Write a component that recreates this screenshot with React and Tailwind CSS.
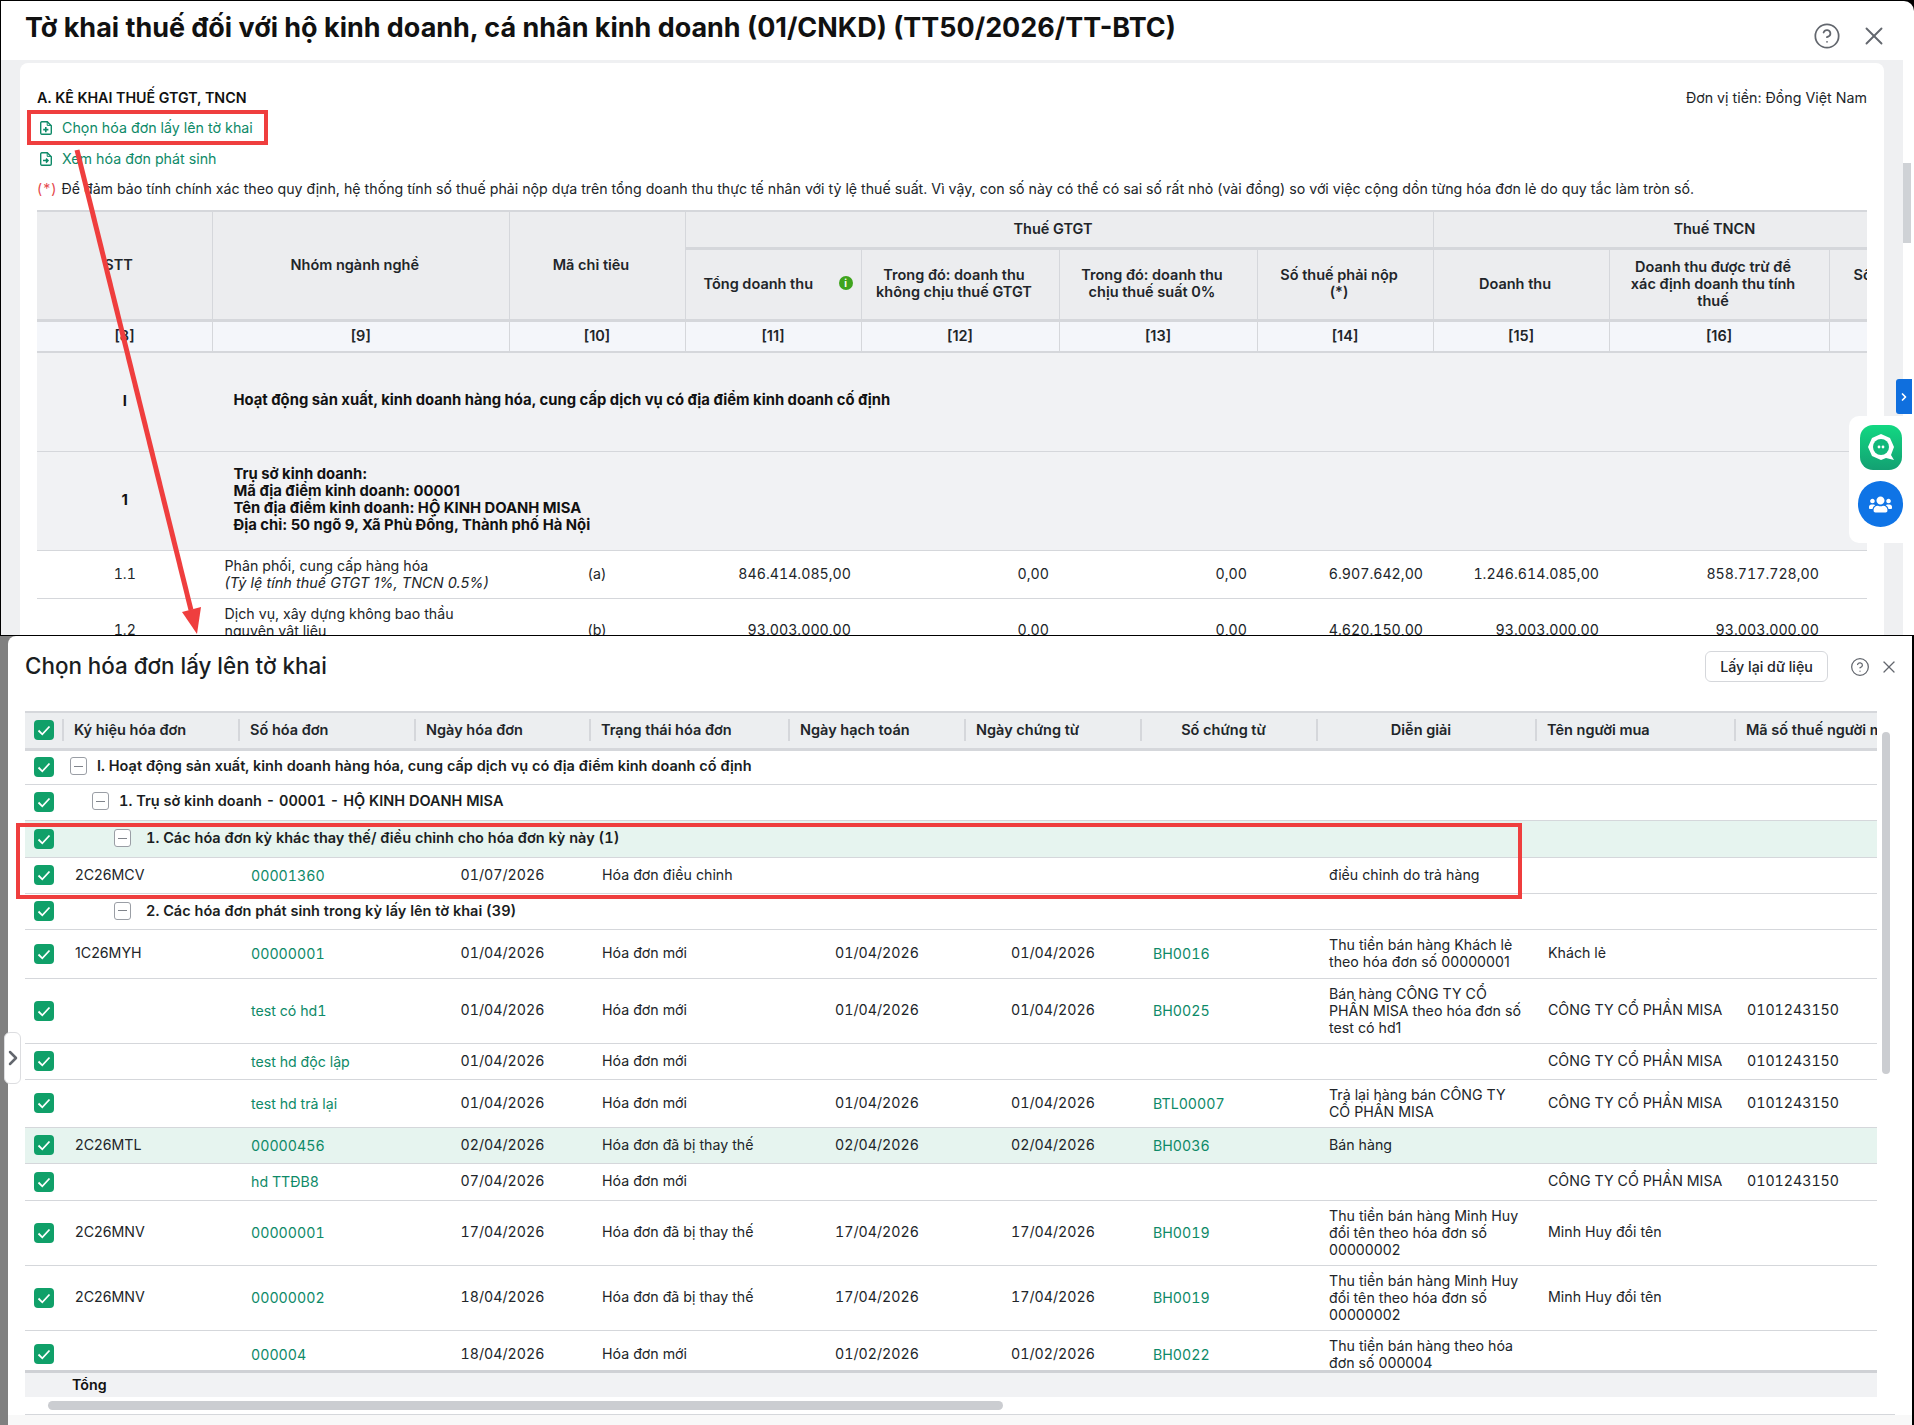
import React from 'react';
import { CircleHelp, X, ChevronRight } from 'lucide-react';
import { FaUsers } from 'react-icons/fa';

const FONT = 'font-[Inter,sans-serif]';

// top sheet
const topCols = [175.5, 296.5, 176, 176, 198, 198, 176, 176, 220, 166];
const indexes = ['[8]', '[9]', '[10]', '[11]', '[12]', '[13]', '[14]', '[15]', '[16]', '[17]'];

const topRows = [
  {
    stt: '1.1',
    h: 'h-[48px]',
    name: ['Phân phối, cung cấp hàng hóa'],
    note: '(Tỷ lệ tính thuế GTGT 1%, TNCN 0.5%)',
    code: '(a)',
    values: ['846.414.085,00', '0,00', '0,00', '6.907.642,00', '1.246.614.085,00', '858.717.728,00'],
  },
  {
    stt: '1.2',
    h: 'h-[65px]',
    name: ['Dịch vụ, xây dựng không bao thầu', 'nguyên vật liệu'],
    note: '(Tỷ lệ tính thuế GTGT 5%, TNCN 2%)',
    code: '(b)',
    values: ['93.003.000,00', '0,00', '0,00', '4.620.150,00', '93.003.000,00', '93.003.000,00'],
  },
];

// invoice picker
const invoiceCols = [37, 176, 176, 175, 199, 176, 176, 176, 219, 199, 200];
const invoiceHeads = [
  { label: 'Ký hiệu hóa đơn' },
  { label: 'Số hóa đơn' },
  { label: 'Ngày hóa đơn' },
  { label: 'Trạng thái hóa đơn' },
  { label: 'Ngày hạch toán' },
  { label: 'Ngày chứng từ' },
  { label: 'Số chứng từ', center: true },
  { label: 'Diễn giải', center: true },
  { label: 'Tên người mua' },
  { label: 'Mã số thuế người mua' },
];

const groups = [
  { text: 'I. Hoạt động sản xuất, kinh doanh hàng hóa, cung cấp dịch vụ có địa điểm kinh doanh cố định', wrap: 'pl-[8px] gap-[10px] pb-[2px]', h: 'h-[35px]' },
  { text: '1. Trụ sở kinh doanh - 00001 - HỘ KINH DOANH MISA', wrap: 'pl-[30px] gap-[10px] pb-[2px]', h: 'h-[36px]' },
  { text: '1. Các hóa đơn kỳ khác thay thế/ điều chỉnh cho hóa đơn kỳ này (1)', wrap: 'pl-[52px] gap-[15px] pb-[1px]', h: 'h-[37px]', hl: true },
];

const invoices = [
  { h: 'h-[36px]', kh: '2C26MCV', so: '00001360', ngay: '01/07/2026', tt: 'Hóa đơn điều chỉnh', dg: 'điều chỉnh do trả hàng' },
  { group: '2. Các hóa đơn phát sinh trong kỳ lấy lên tờ khai (39)', wrap: 'pl-[52px] gap-[15px] pb-[1px]', h: 'h-[36px]' },
  { h: 'h-[49px]', kh: '1C26MYH', so: '00000001', ngay: '01/04/2026', tt: 'Hóa đơn mới', ht: '01/04/2026', ct: '01/04/2026', sct: 'BH0016', dg: 'Thu tiền bán hàng Khách lẻ theo hóa đơn số 00000001', ten: 'Khách lẻ' },
  { h: 'h-[65px]', so: 'test có hd1', ngay: '01/04/2026', tt: 'Hóa đơn mới', ht: '01/04/2026', ct: '01/04/2026', sct: 'BH0025', dg: 'Bán hàng CÔNG TY CỔ PHẦN MISA theo hóa đơn số test có hd1', ten: 'CÔNG TY CỔ PHẦN MISA', mst: '0101243150' },
  { h: 'h-[36px]', so: 'test hd độc lập', ngay: '01/04/2026', tt: 'Hóa đơn mới', ten: 'CÔNG TY CỔ PHẦN MISA', mst: '0101243150' },
  { h: 'h-[48px]', so: 'test hd trả lại', ngay: '01/04/2026', tt: 'Hóa đơn mới', ht: '01/04/2026', ct: '01/04/2026', sct: 'BTL00007', dg: 'Trả lại hàng bán CÔNG TY CỔ PHẦN MISA', ten: 'CÔNG TY CỔ PHẦN MISA', mst: '0101243150' },
  { h: 'h-[36px]', hl: true, kh: '2C26MTL', so: '00000456', ngay: '02/04/2026', tt: 'Hóa đơn đã bị thay thế', ht: '02/04/2026', ct: '02/04/2026', sct: 'BH0036', dg: 'Bán hàng' },
  { h: 'h-[37px]', so: 'hd TTĐB8', ngay: '07/04/2026', tt: 'Hóa đơn mới', ten: 'CÔNG TY CỔ PHẦN MISA', mst: '0101243150' },
  { h: 'h-[65px]', kh: '2C26MNV', so: '00000001', ngay: '17/04/2026', tt: 'Hóa đơn đã bị thay thế', ht: '17/04/2026', ct: '17/04/2026', sct: 'BH0019', dg: 'Thu tiền bán hàng Minh Huy đổi tên theo hóa đơn số 00000002', ten: 'Minh Huy đổi tên' },
  { h: 'h-[65px]', kh: '2C26MNV', so: '00000002', ngay: '18/04/2026', tt: 'Hóa đơn đã bị thay thế', ht: '17/04/2026', ct: '17/04/2026', sct: 'BH0019', dg: 'Thu tiền bán hàng Minh Huy đổi tên theo hóa đơn số 00000002', ten: 'Minh Huy đổi tên' },
  { h: 'h-[48px]', so: '000004', ngay: '18/04/2026', tt: 'Hóa đơn mới', ht: '01/02/2026', ct: '01/02/2026', sct: 'BH0022', dg: 'Thu tiền bán hàng theo hóa đơn số 000004' },
];

function Check() {
  return (
    <span className="flex h-[20px] w-[20px] items-center justify-center rounded-[4px] bg-[#10a069]">
      <svg viewBox="0 0 20 20" className="h-[20px] w-[20px]" fill="none" stroke="white" strokeWidth="1.8">
        <path d="M4.5 10.5l3.8 3.8 7.2-7.8" />
      </svg>
    </span>
  );
}

function MinusBox() {
  return (
    <span className="flex h-[18px] w-[17px] shrink-0 items-center justify-center rounded-[3px] border border-[#9a9ea5] bg-white">
      <span className="h-[1px] w-[9px] bg-[#80848b]" />
    </span>
  );
}

function DocIcon({ arrow }) {
  return (
    <svg viewBox="0 0 12 14" className="h-[14px] w-[12px] shrink-0" fill="none" stroke="#0e8a68" strokeWidth="1.4">
      <path d="M1.7.7h5.6l4 4v7.2a1.3 1.3 0 0 1-1.3 1.3H1.7A1.3 1.3 0 0 1 .7 11.9V2a1.3 1.3 0 0 1 1-1.3z" />
      <path d="M7.2.8v3.6h3.9" strokeWidth="1" />
      {arrow ? (
        <path d="M3 8.6h5M6 6.6l2 2-2 2" strokeWidth="1.5" />
      ) : (
        <path d="M3.2 8.6h5.2M5.8 6v5.2" strokeWidth="1.6" />
      )}
    </svg>
  );
}

function TopSheet() {
  return (
    <div className="overflow-hidden border-t-2 border-[#d5d7db]">
      <table className="w-[1958px] table-fixed border-collapse text-[14.2px] text-[#212529]">
        <colgroup>
          {topCols.map((w, i) => (
            <col key={i} style={{ width: w }} />
          ))}
        </colgroup>
        <thead className="bg-[#ecedef] text-[14.5px] font-semibold">
          <tr className="h-[36px]">
            <th rowSpan="2" className="border-r border-b-[3px] border-[#d5d7db] pr-[12px] font-semibold">STT</th>
            <th rowSpan="2" className="border-r border-b-[3px] border-[#d5d7db] pr-[12px] font-semibold">Nhóm ngành nghề</th>
            <th rowSpan="2" className="border-r border-b-[3px] border-[#d5d7db] pr-[12px] font-semibold">Mã chỉ tiêu</th>
            <th colSpan="4" className="border-r border-b-[3px] border-[#d5d7db] pr-[12px] font-semibold">Thuế GTGT</th>
            <th colSpan="3" className="border-b-[3px] border-[#d5d7db] font-semibold">Thuế TNCN</th>
          </tr>
          <tr className="h-[72px] leading-[17px]">
            <th className="border-r border-b-[3px] border-[#d5d7db] pb-[2px] pl-[18px] pr-[8px] font-semibold">
              <span className="flex items-center justify-between">
                Tổng doanh thu
                <span className="flex h-[14px] w-[14px] items-center justify-center rounded-full bg-[#3fa41d] text-[10px] font-bold text-white">i</span>
              </span>
            </th>
            <th className="border-r border-b-[3px] border-[#d5d7db] pb-[2px] pl-[8px] pr-[20px] font-semibold">Trong đó: doanh thu không chịu thuế GTGT</th>
            <th className="border-r border-b-[3px] border-[#d5d7db] pb-[2px] pl-[8px] pr-[20px] font-semibold">Trong đó: doanh thu chịu thuế suất 0%</th>
            <th className="border-r border-b-[3px] border-[#d5d7db] pb-[2px] pl-[8px] pr-[20px] font-semibold">Số thuế phải nộp<br />(*)</th>
            <th className="border-r border-b-[3px] border-[#d5d7db] pb-[2px] pl-[8px] pr-[20px] font-semibold">Doanh thu</th>
            <th className="border-r border-b-[3px] border-[#d5d7db] pb-[2px] pl-[16px] pr-[28px] font-semibold">Doanh thu được trừ để xác định doanh thu tính thuế</th>
            <th className="border-b-[3px] border-[#d5d7db] pb-[2px] px-[14px] font-semibold">Số thuế phải nộp<br />(*)</th>
          </tr>
        </thead>
        <tbody>
          <tr className="h-[32px] bg-[#f4f6fa] text-[14.5px] font-semibold">
            {indexes.map((t, i) => (
              <td key={i} className="border-r border-b-2 border-[#d5d7db] text-center">{t}</td>
            ))}
          </tr>
          <tr className="h-[99px] bg-[#f1f2f4] text-[14.8px] font-bold text-[#111]">
            <td className="border-b border-[#d5d7db] pb-[1px] text-center">I</td>
            <td colSpan="9" className="border-b border-[#d5d7db] pb-[3px] pl-[21px]">
              Hoạt động sản xuất, kinh doanh hàng hóa, cung cấp dịch vụ có địa điểm kinh doanh cố định
            </td>
          </tr>
          <tr className="h-[99px] bg-[#f1f2f4] text-[14.8px] font-bold leading-[17px] text-[#111]">
            <td className="border-b border-[#d5d7db] text-center">1</td>
            <td colSpan="9" className="border-b border-[#d5d7db] pb-[2px] pl-[21px]">
              <div>Trụ sở kinh doanh:</div>
              <div>Mã địa điểm kinh doanh: 00001</div>
              <div>Tên địa điểm kinh doanh: HỘ KINH DOANH MISA</div>
              <div>Địa chỉ: 50 ngõ 9, Xã Phù Đổng, Thành phố Hà Nội</div>
            </td>
          </tr>
          {topRows.map((r) => (
            <tr key={r.stt} className={`${r.h} leading-[17px]`}>
              <td className="border-b border-[#d5d7db] pb-[2px] text-center tabular-nums">{r.stt}</td>
              <td className="border-b border-[#d5d7db] pl-[12px]">
                {r.name.map((n) => (
                  <div key={n}>{n}</div>
                ))}
                <div className="text-[14.5px] italic">{r.note}</div>
              </td>
              <td className="border-b border-[#d5d7db] pb-[2px] text-center">{r.code}</td>
              {r.values.map((v, i) => (
                <td key={i} className="border-b border-[#d5d7db] pb-[2px] pr-[10px] text-right tabular-nums">{v}</td>
              ))}
              <td className="border-b border-[#d5d7db]" />
            </tr>
          ))}
        </tbody>
      </table>
    </div>
  );
}

function InvoiceRow({ row }) {
  if (row.group) return <GroupRow g={{ text: row.group, wrap: row.wrap, h: row.h }} />;
  const bg = row.hl ? 'bg-[#e6f4ef]' : '';
  const cell = 'border-b border-[#d5d7db] pl-[13px] align-middle';
  const dateCell = 'border-b border-[#d5d7db] pb-[2px] pl-[2px] text-center tabular-nums';
  return (
    <tr className={`${row.h} ${bg} leading-[17px]`}>
      <td className="border-b border-[#d5d7db] pl-[9px]"><Check /></td>
      <td className={`${cell} pb-[2px]`}>{row.kh}</td>
      <td className={`${cell} tabular-nums text-[#0e8a68]`}>{row.so}</td>
      <td className={dateCell}>{row.ngay}</td>
      <td className={`${cell} pb-[2px]`}>{row.tt}</td>
      <td className={dateCell}>{row.ht}</td>
      <td className={dateCell}>{row.ct}</td>
      <td className={`${cell} tabular-nums text-[#0e8a68]`}>{row.sct}</td>
      <td className={`${cell} pb-[1px] pr-[10px]`}>{row.dg}</td>
      <td className={`${cell} pb-[2px]`}>{row.ten}</td>
      <td className={`${cell} pb-[2px] tabular-nums`}>{row.mst}</td>
    </tr>
  );
}

function GroupRow({ g }) {
  return (
    <tr className={`${g.h} ${g.hl ? 'bg-[#e6f4ef]' : ''}`}>
      <td className="border-b border-[#d5d7db] pl-[9px]"><Check /></td>
      <td colSpan="10" className="border-b border-[#d5d7db]">
        <div className={`flex items-center text-[14.5px] font-semibold tabular-nums text-[#1a1d21] ${g.wrap}`}>
          <MinusBox />
          <span>{g.text}</span>
        </div>
      </td>
    </tr>
  );
}

function InvoiceTable() {
  return (
    <div className="h-[659px] w-[1852px] overflow-hidden">
      <table className="w-[1909px] table-fixed border-collapse text-[14.2px] text-[#212529]">
        <colgroup>
          {invoiceCols.map((w, i) => (
            <col key={i} style={{ width: w }} />
          ))}
        </colgroup>
        <thead>
          <tr className="h-[37px] border-t-2 border-b-[3px] border-[#d5d7db] bg-[#eceef0]">
            <th className="pl-[9px] text-left"><Check /></th>
            {invoiceHeads.map((h) => (
              <th key={h.label} className="text-[14.5px] font-semibold">
                <div className={`flex h-[22px] items-center border-l-2 border-[#d5d7db] ${h.center ? 'justify-center pr-[11px]' : 'pl-[10px]'}`}>
                  <span className="whitespace-nowrap">{h.label}</span>
                </div>
              </th>
            ))}
          </tr>
        </thead>
        <tbody>
          {groups.map((g) => (
            <GroupRow key={g.text} g={g} />
          ))}
          {invoices.map((r, i) => (
            <InvoiceRow key={i} row={r} />
          ))}
        </tbody>
      </table>
    </div>
  );
}

export default function App() {
  return (
    <div className={`relative flex h-[1425px] w-[1914px] flex-col overflow-hidden bg-black ${FONT}`}>
      {/* top window */}
      <div className="ml-px mt-px flex h-[634px] shrink-0 flex-col overflow-hidden rounded-tr-[10px] bg-white">
        <div className="flex h-[59px] shrink-0 items-start justify-between pl-[24px] pr-[25px]">
          <h1 className="mt-[7px] text-[26.95px] font-bold leading-[40px] text-[#111]">
            Tờ khai thuế đối với hộ kinh doanh, cá nhân kinh doanh (01/CNKD) (TT50/2026/TT-BTC)
          </h1>
          <div className="mt-[20px] flex items-center gap-[18px] text-[#63676e]">
            <CircleHelp size={28} strokeWidth={1.5} />
            <X size={30} strokeWidth={1.5} />
          </div>
        </div>
        <div className="flex flex-1 overflow-hidden bg-[#eff0f2] pl-[19px]">
          <div className="mt-[3px] w-[1864px] rounded-t-[8px] bg-white px-[17px] text-[14.25px] text-[#212529]">
            <div className="flex items-center justify-between pt-[25px] leading-[20px]">
              <span className="font-semibold text-[#111]">A. KÊ KHAI THUẾ GTGT, TNCN</span>
              <span>Đơn vị tiền: Đồng Việt Nam</span>
            </div>
            <div className="mt-[10px] flex items-center gap-[10px] pl-[3px] leading-[20px] text-[#0e8a68]">
              <DocIcon /> Chọn hóa đơn lấy lên tờ khai
            </div>
            <div className="mt-[11px] flex items-center gap-[10px] pl-[3px] leading-[20px] text-[#0e8a68]">
              <DocIcon arrow /> Xem hóa đơn phát sinh
            </div>
            <p className="mt-[10px] text-[14.2px] leading-[20px]">
              <span className="tracking-[1px] text-[#e5484d]">(*)</span> Để đảm bảo tính chính xác theo quy định, hệ thống tính số thuế phải nộp dựa trên tổng doanh thu thực tế nhân với tỷ lệ thuế suất. Vì vậy, con số này có thể có sai số rất nhỏ (vài đồng) so với việc cộng dồn từng hóa đơn lẻ do quy tắc làm tròn số.
            </p>
            <div className="mt-[11px]">
              <TopSheet />
            </div>
          </div>
          <div className="ml-[19px] flex w-[11px] flex-col bg-white">
            <div className="mt-[103px] h-[80px] w-[8px] bg-[#cfd2d6]" />
          </div>
        </div>
      </div>

      {/* invoice picker window */}
      <div className="mr-[2px] mt-px flex flex-1 overflow-hidden bg-[#808080] pl-[8px]">
        <div className="flex flex-1 flex-col overflow-hidden rounded-tl-[8px] bg-white">
          <div className="flex h-[75px] shrink-0 items-start justify-between pl-[17px] pr-[13px]">
            <h2 className="mt-[14px] text-[22.4px] font-medium leading-[32px] text-[#1a1d21]">Chọn hóa đơn lấy lên tờ khai</h2>
            <div className="mt-[15px] flex items-center">
              <button className="h-[31px] w-[123px] rounded-[6px] border border-[#d5d7db] bg-white text-[14.25px] font-medium text-[#212529]">
                Lấy lại dữ liệu
              </button>
              <CircleHelp size={20} strokeWidth={1.5} className="ml-[22px] text-[#63676e]" />
              <X size={20} strokeWidth={1.5} className="ml-[9px] text-[#63676e]" />
            </div>
          </div>
          <div className="flex pl-[17px]">
            <InvoiceTable />
            <div className="ml-[5px] mt-[21px] h-[342px] w-[8px] rounded-full bg-[#cbcdd1]" />
          </div>
          <div className="ml-[17px] flex h-[27px] w-[1852px] items-center border-t-[3px] border-[#cfd1d5] bg-[#f1f2f4] pl-[47px] text-[14.25px] font-semibold text-[#111]">
            Tổng
          </div>
          <div className="ml-[40px] mt-[4px] h-[9px] w-[955px] rounded-full bg-[#cbcdd1]" />
          <div className="ml-[17px] mt-[4px] h-[1px] w-[1870px] bg-[#d5d7db]" />
          <div className="flex-1 bg-[#f8f8f8]" />
        </div>
      </div>

      {/* expand tab */}
      <div className="absolute left-[4px] top-[1032px] flex h-[52px] w-[17px] items-center justify-center rounded-[6px] border border-[#dcdde0] bg-white text-[#63676e]">
        <ChevronRight size={24} strokeWidth={2.5} className="shrink-0" />
      </div>

      {/* side widgets */}
      <div className="absolute left-[1896px] top-[379px] flex h-[35px] w-[16px] items-center justify-center rounded-l-[3px] bg-[#0f6fde] text-white">
        <ChevronRight size={12} strokeWidth={3.5} />
      </div>
      <div className="absolute left-[1849px] top-[416px] flex h-[127px] w-[54px] flex-col items-center gap-[10px] rounded-l-[10px] bg-white pl-[9px] pt-[9px]">
        <svg viewBox="0 0 44 46" className="h-[46px] w-[44px] shrink-0">
          <defs>
            <linearGradient id="chatGreen" x1="0" y1="0" x2="0" y2="1">
              <stop offset="0" stopColor="#12d882" />
              <stop offset="1" stopColor="#13a072" />
            </linearGradient>
          </defs>
          <rect width="42" height="45" x="1" y="0" rx="13" fill="url(#chatGreen)" />
          <path d="M22 9l9 4 4 9-3 8 3 5-8-2-5 2-9-4-4-9 4-9z" fill="white" />
          <circle cx="22" cy="22" r="8" fill="#11b87a" />
          <circle cx="20" cy="22" r="1.4" fill="white" />
          <circle cx="24" cy="22" r="1.4" fill="white" />
        </svg>
        <span className="flex h-[46px] w-[45px] shrink-0 items-center justify-center rounded-full bg-[#0f74e6] text-white">
          <FaUsers size={23} />
        </span>
      </div>

      {/* red annotations */}
      <div className="absolute left-[27px] top-[110px] h-[35px] w-[241px] border-4 border-[#ef3e3e]" />
      <div className="absolute left-[16px] top-[823px] h-[76px] w-[1506px] border-4 border-[#ef3e3e]" />
      <svg className="pointer-events-none absolute left-0 top-0 h-[700px] w-[300px]" viewBox="0 0 300 700" fill="none">
        <path d="M77 150L191 610" stroke="#ef3e3e" strokeWidth="5" />
        <path d="M182 612L201 607L197 634Z" fill="#ef3e3e" />
      </svg>
    </div>
  );
}
